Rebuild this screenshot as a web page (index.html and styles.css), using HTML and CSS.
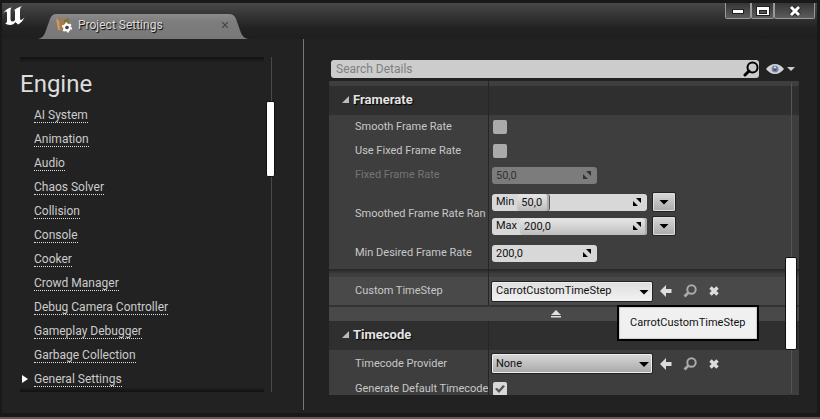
FILE: index.html
```html
<!DOCTYPE html>
<html lang="en">
<head>
<meta charset="utf-8">
<title>Project Settings</title>
<link rel="stylesheet" href="styles.css">
</head>
<body>
<svg class="defs" aria-hidden="true">
  <symbol id="drag" viewBox="0 0 8 8"><path d="M3 0H8V5ZM0 3V8H5Z"/></symbol>
  <symbol id="back" viewBox="0 0 12 12"><path d="M6 0V4H11.500V8H6V12L0 6Z"/></symbol>
  <symbol id="find" viewBox="0 0 14 14"><circle cx="8.500" cy="5.500" r="4.200" fill="none" stroke="currentColor" stroke-width="2"/><path d="M5.500 8.500L1.500 12.500" stroke="currentColor" stroke-width="2.600"/></symbol>
  <symbol id="clear" viewBox="0 0 10 10"><path d="M1.500 1.500L8.500 8.500M8.500 1.500L1.500 8.500" stroke="currentColor" stroke-width="3.400"/></symbol>
</svg>
<div class="window">
  <header class="titlebar">
    <svg class="logo" viewBox="0 0 24 20" aria-label="Unreal"><path d="M1 8Q3 3 9 1.500Q10 1.500 9 2.500Q8.500 3 8.500 4V13Q8.500 15 10 15.500Q12 15.500 13 14V5Q13 4 11.500 4.500Q14.500 1.500 20 0Q18 1.500 18 4V13Q18.500 14.500 20 13.500Q21 13 22.500 11Q21 15.500 16 18.500L13.500 16Q11.500 19 8 19Q4.500 19 3 17Q5 17.500 5 15V7Q5 5 3.500 5.500Q2 6 1 8Z"/></svg>
    <div class="tab">
      <svg class="tab-shape" viewBox="0 0 210 25" preserveAspectRatio="none" aria-hidden="true">
        <defs><linearGradient id="tabfill" x2="0" y2="1"><stop stop-color="#8c8c8c"/><stop offset=".3" stop-color="#7d7d7d"/><stop offset="1" stop-color="#787878"/></linearGradient></defs>
        <path fill="url(#tabfill)" d="M0 25Q5 24 7 19L12 5Q14 0 18 0H191Q196 0 198 5L203 19Q205 24 210 25Z"/>
      </svg>
      <svg class="tab-icon" viewBox="0 0 16 16" aria-hidden="true">
        <path d="M0 1L8 2L13 1V9L7 14L2 13Z" fill="#a67c4e"/><path d="M0 1L3 4L4 13L2 13Z" fill="#c69c6b"/><path d="M8 3L13 1V8L8 8Z" fill="#8b6a3f"/><path d="M8 7L11 4V7Z" fill="#75a832"/>
        <circle cx="11" cy="10.500" r="2.800" fill="none" stroke="#fff" stroke-width="2.200"/><circle cx="11" cy="10.500" r="4.300" fill="none" stroke="#fff" stroke-width="1.600" stroke-dasharray="2 2.500"/><circle cx="11" cy="10.500" r="1.700" fill="#444"/>
      </svg>
      <span class="tab-title">Project Settings</span>
      <button class="tab-close" aria-label="Close tab"><svg viewBox="0 0 6 6"><path d="M0 0L6 6M6 0L0 6" stroke="#444" stroke-width="1.200"/></svg></button>
    </div>
    <div class="win-buttons">
      <button aria-label="Minimize"><svg width="14" height="8" viewBox="0 0 14 8"><rect x="1.500" y="2.500" width="11" height="4" fill="#fff" stroke="#222"/></svg></button>
      <button class="slim" aria-label="Maximize"><svg width="14" height="10" viewBox="0 0 14 10"><rect x=".5" y=".5" width="13" height="9" fill="#fff" stroke="#222"/><rect x="3.500" y="4.500" width="7" height="3" fill="#555" stroke="#222"/></svg></button>
      <button class="wide" aria-label="Close"><svg width="12" height="12" viewBox="0 0 12 12"><path d="M2 2L10 10M10 2L2 10" stroke="#222" stroke-width="5"/><path d="M2 2L10 10M10 2L2 10" stroke="#fff" stroke-width="3"/></svg></button>
    </div>
  </header>
  <main class="content">
    <nav class="sidebar">
      <div class="list">
        <h1>Engine</h1>
        <ul>
          <li><a href="#">AI System</a></li>
          <li><a href="#">Animation</a></li>
          <li><a href="#">Audio</a></li>
          <li><a href="#">Chaos Solver</a></li>
          <li><a href="#">Collision</a></li>
          <li><a href="#">Console</a></li>
          <li><a href="#">Cooker</a></li>
          <li><a href="#">Crowd Manager</a></li>
          <li><a href="#">Debug Camera Controller</a></li>
          <li><a href="#">Gameplay Debugger</a></li>
          <li><a href="#">Garbage Collection</a></li>
          <li class="current"><a href="#">General Settings</a></li>
        </ul>
      </div>
      <div class="track"><div class="thumb side-thumb"></div></div>
    </nav>
    <section class="details">
      <div class="toolbar">
        <div class="search">
          <input type="search" placeholder="Search Details" aria-label="Search Details">
          <svg viewBox="0 0 16 16" aria-hidden="true"><circle cx="9.500" cy="6.500" r="5" fill="none" stroke="#000" stroke-width="2"/><path d="M6 10L2 14" stroke="#000" stroke-width="3" stroke-linecap="round"/></svg>
        </div>
        <button class="view" aria-label="View options">
          <svg class="eye" viewBox="0 0 18 12"><path d="M0 6Q4 1 9 1T18 6Q14 11 9 11T0 6Z" fill="#d4d4d4"/><circle cx="9" cy="6" r="3.500" fill="#7686ab"/><circle cx="9" cy="6.500" r="1.600" fill="#46557a"/><circle cx="9" cy="4.500" r="1" fill="#dfe8ff"/></svg>
          <span class="caret"></span>
        </button>
      </div>
      <div class="panel">
        <div class="stub"></div>
        <h2><span class="open"></span>Framerate</h2>
        <div class="rows">
          <div class="row"><label for="smooth">Smooth Frame Rate</label><div class="value"><input type="checkbox" id="smooth"></div></div>
          <div class="row"><label for="usefixed">Use Fixed Frame Rate</label><div class="value"><input type="checkbox" id="usefixed"></div></div>
          <div class="row off"><label for="fixed">Fixed Frame Rate</label><div class="value"><div class="num"><input type="text" id="fixed" value="50,0" disabled><svg><use href="#drag"/></svg></div></div></div>
          <div class="row range"><span class="name">Smoothed Frame Rate Ran</span>
            <div class="value">
              <div class="bound"><div class="num long"><label for="min">Min</label><input class="fill short" type="text" id="min" value="50,0"><svg><use href="#drag"/></svg></div><button class="drop" aria-label="Minimum options"><span class="caret"></span></button></div>
              <div class="bound"><div class="num long"><label for="max">Max</label><input class="fill" type="text" id="max" value="200,0"><svg><use href="#drag"/></svg></div><button class="drop" aria-label="Maximum options"><span class="caret"></span></button></div>
            </div>
          </div>
          <div class="row last"><label for="desired">Min Desired Frame Rate</label><div class="value"><div class="num"><input type="text" id="desired" value="200,0"><svg><use href="#drag"/></svg></div></div></div>
        </div>
        <div class="gap"></div>
        <div class="row asset lit"><label for="step">Custom TimeStep</label><div class="value">
          <div class="combo bright"><select id="step"><option>CarrotCustomTimeStep</option></select><span class="caret"></span></div>
          <button class="tool" aria-label="Use selected"><svg width="12" height="12"><use href="#back"/></svg></button><button class="tool dim" aria-label="Browse"><svg width="14" height="14"><use href="#find"/></svg></button><button class="tool" aria-label="Clear"><svg width="10" height="10"><use href="#clear"/></svg></button>
          <div class="tooltip" role="tooltip">CarrotCustomTimeStep</div>
        </div></div>
        <button class="expander" aria-label="Hide advanced"><svg width="10" height="8" viewBox="0 0 10 8"><path d="M5 0L10 5H0ZM0 6H10V7.500H0Z"/></svg></button>
        <h2><span class="open"></span>Timecode</h2>
        <div class="row asset"><label for="provider">Timecode Provider</label><div class="value">
          <div class="combo"><select id="provider"><option>None</option></select><span class="caret"></span></div>
          <button class="tool" aria-label="Use selected"><svg width="12" height="12"><use href="#back"/></svg></button><button class="tool dim" aria-label="Browse"><svg width="14" height="14"><use href="#find"/></svg></button><button class="tool" aria-label="Clear"><svg width="10" height="10"><use href="#clear"/></svg></button>
        </div></div>
        <div class="row"><label for="generate">Generate Default Timecode</label><div class="value"><input type="checkbox" id="generate" checked></div></div>
        <div class="panel-track"><div class="thumb panel-thumb"></div></div>
      </div>
    </section>
  </main>
</div>
</body>
</html>
```
FILE: styles.css
```css
* { box-sizing: border-box; }
body { margin: 0; background: #191919; color: #c8c8c8; font: 12px/16px Roboto, sans-serif; }
button { margin: 0; padding: 0; border: 0; background: none; color: inherit; font: inherit; }
input, select { font: inherit; }
svg { display: block; fill: currentColor; }
.defs { position: absolute; width: 0; height: 0; }

.window { display: flex; flex-direction: column; height: 100vh; padding: 3px 3px 4px 2px; border-bottom: 2px solid #5c5c5c; background: #191919; }

.titlebar { display: flex; height: 36px; background: linear-gradient(#484848, #343434 35%, #222 70%, #1e1e1e); }
.logo { width: 24px; height: 20px; margin-top: 3px; fill: #fff; }
.tab { position: relative; display: flex; align-items: center; width: 210px; height: 25px; margin: 11px 0 0 12px; padding: 0 20px 4px 18px; }
.tab-shape { position: absolute; inset: 0; width: 100%; height: 100%; }
.tab-icon { position: relative; width: 16px; height: 16px; }
.tab-title { position: relative; flex: 1; margin-left: 6px; color: #dcdcdc; text-shadow: 1px 1px 1px #000; }
.tab-close { position: relative; }
.tab-close svg { width: 6px; height: 6px; }
.win-buttons { display: flex; height: 16px; margin-left: auto; margin-right: 2px; }
.win-buttons button { display: flex; align-items: center; justify-content: center; width: 26px; border: 1px solid #999; border-top: 0; border-radius: 0 0 2px 2px; background: linear-gradient(#353535, #5c5c5c); }
.win-buttons .slim { width: 23px; }
.win-buttons .wide { width: 41px; }

.content { display: flex; flex: 1; min-height: 0; background: #222; }
.sidebar { display: flex; width: 302px; padding: 18px 31px 18px 18px; border-right: 1px solid #777; margin: 0 0 3px; background-clip: padding-box; }
.list { flex: 1; background: linear-gradient(#111, #222 6px) top / 100% 6px no-repeat, linear-gradient(#222, #111) bottom / 100% 5px no-repeat; }
h1 { margin: 0; padding: 12px 0 3px; color: #ddd; font-size: 24px; line-height: 30px; font-weight: 400; }
ul { margin: 0; padding: 0 0 0 14px; list-style: none; }
li { position: relative; height: 24px; padding-top: 5px; }
li a { display: inline-block; height: 16px; border-bottom: 1px dotted #ddd; color: #ccc; line-height: 16px; text-decoration: none; }
.current::before { content: ""; position: absolute; left: -12px; top: 9px; width: 6px; height: 8px; background: #fff; clip-path: polygon(0 0, 100% 50%, 0 100%); }
.track { position: relative; width: 1px; margin-left: 7px; background: #484848; }
.thumb { position: absolute; border: 1px solid #111; border-radius: 2px; background: #fff; }
.side-thumb { left: -5px; top: 44px; width: 9px; height: 76px; }

.details { display: flex; flex: 1; min-width: 0; flex-direction: column; padding: 21px 18px 18px 25px; }
.toolbar { display: flex; gap: 7px; height: 18px; margin: 0 4px 3px 2px; }
.search { display: flex; flex: 1; align-items: center; border-radius: 3px; background: #ccc; }
.search input { flex: 1; min-width: 0; padding: 0 5px; border: 0; outline: 0; background: none; }
.search input::placeholder { color: #808080; }
.search svg { width: 16px; height: 16px; }
.view { display: flex; gap: 3px; align-items: center; color: #ccc; }
.eye { width: 18px; height: 12px; }
.caret { width: 8px; height: 4px; background: currentColor; clip-path: polygon(0 0, 100% 0, 50% 100%); }

.panel { position: relative; flex: 1; min-height: 0; overflow: hidden; background: #3e3e3e; font-size: 11px; }
.panel::before { content: ""; position: absolute; z-index: 1; left: 159px; top: 0; bottom: 0; width: 1px; background: #262626; }
.stub { height: 5px; border-radius: 0 0 3px 3px; background: #3e3e3e; box-shadow: 0 3px 0 #2f2f2f; }
h2 { display: flex; gap: 4px; align-items: center; height: 29px; margin: 0; padding: 0 0 2px 13px; background: #2f2f2f; color: #e4e4e4; font-size: 13px; line-height: 16px; font-weight: 700; text-shadow: 1px 1px 1px #000; }
.open { width: 7px; height: 7px; background: #bbb; clip-path: polygon(100% 0, 100% 100%, 0 100%); }
.row { display: grid; grid-template-columns: 159px 1fr; align-items: center; height: 24px; }
.row > label, .name { padding-left: 26px; white-space: nowrap; }
.value { display: flex; align-items: center; padding-left: 4px; }
.range { height: 54px; }
.last { height: 28px; padding-bottom: 4px; }
.range .value { flex-direction: column; align-items: flex-start; gap: 4px; }
.bound { display: flex; gap: 5px; align-items: center; height: 20px; }
.num { display: flex; align-items: center; width: 105px; height: 17px; padding-right: 6px; border-radius: 3px; background: #d8d8d8; color: #111; }
.num input { flex: 1; min-width: 0; height: 17px; padding: 0 4px; border: 0; border-radius: 3px; outline: 0; background: none; color: inherit; }
.num svg { width: 8px; height: 8px; fill: #000; }
.long { position: relative; width: 155px; padding: 0; }
.long label { padding: 0 3px 0 4px; }
.long svg { position: absolute; right: 6px; }
.num .fill { background: linear-gradient(#e8e8e8, #bdbdbd); box-shadow: inset -2px 0 1px #aaa; }
.num .short { flex: none; width: 33px; border-right: 1px solid #555; }
.off { color: #757575; }
.off .num { background: #7c7c7c; color: #333; }
.off svg { fill: #333; }
.drop { display: flex; align-items: center; justify-content: center; width: 24px; height: 20px; border: 1px solid #222; border-radius: 2px; background: linear-gradient(#d8d8d8, #aaa); box-shadow: inset 0 0 0 1px #ddd; color: #000; }
.value input[type=checkbox] { appearance: none; width: 14px; height: 14px; margin: 0 0 0 1px; border-radius: 2px; background: #aaa; }
.value input[type=checkbox]:checked { display: grid; place-items: center; background: #d8d8d8; }
.value input:checked::before { content: ""; width: 10px; height: 8px; background: #555; clip-path: polygon(0 50%, 20% 35%, 38% 60%, 80% 0, 100% 15%, 40% 100%); }
.gap { height: 8px; background: linear-gradient(#262626, #3e3e3e 5px); }
.asset { height: 27px; }
.lit { height: 28px; background: #494949; }
.asset .value { position: relative; padding-left: 3px; }
.combo { position: relative; width: 162px; height: 21px; margin-right: 1px; }
.combo select { appearance: none; width: 100%; height: 100%; padding: 0 4px; border: 1px solid #222; border-radius: 2px; background: linear-gradient(#d8d8d8, #a8a8a8); box-shadow: inset 0 0 0 1px #eee; color: #111; }
.bright select { background: linear-gradient(#dedede, #f2f2f2); }
.drop .caret, .combo .caret { width: 10px; height: 5px; background: #000; }
.combo .caret { position: absolute; right: 4px; top: 9px; }
.tool { display: flex; align-items: center; justify-content: center; width: 24px; height: 20px; color: #ddd; }
.dim { color: #aaa; }
.tooltip { position: absolute; z-index: 3; left: 129px; top: 24px; padding: 8px 11px; border: 2px solid #000; background: #f0f0f0; color: #111; line-height: 16px; box-shadow: inset 0 0 1px 1px #ccc; }
.expander { position: relative; z-index: 2; display: flex; align-items: center; justify-content: center; width: 100%; height: 16px; padding-right: 16px; border-top: 2px solid #333; background: #494949; color: #e0e0e0; }
.panel-track { position: absolute; z-index: 2; right: 7px; top: 2px; bottom: 2px; width: 1px; background: #555; }
.panel-thumb { left: -6px; top: 174px; width: 12px; height: 93px; }
```
